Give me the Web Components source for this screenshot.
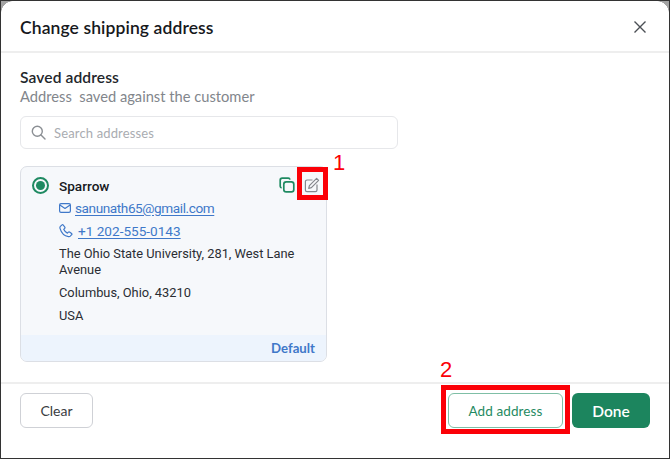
<!DOCTYPE html>
<html>
<head>
<meta charset="utf-8">
<title>Change shipping address</title>
<style>
  html, body { margin: 0; padding: 0; background: #8f8f8f; }
  body { width: 670px; height: 459px; overflow: hidden; font-family: "Lato", "Liberation Sans", sans-serif; }
</style>
</head>
<body>
<address-dialog heading="Change shipping address">
  <section-title title="Saved address" subtitle="Address&nbsp; saved against the customer"></section-title>
  <search-box placeholder="Search addresses"></search-box>
  <address-card name="Sparrow" email="sanunath65@gmail.com" phone="+1 202-555-0143" tag="Default">
    <p>The Ohio State University, 281, West Lane Avenue</p>
    <p>Columbus, Ohio, 43210</p>
    <p>USA</p>
  </address-card>
  <action-button slot="start" kind="plain">Clear</action-button>
  <action-button slot="end" kind="outline">Add address</action-button>
  <action-button slot="end" kind="solid">Done</action-button>
</address-dialog>
<red-callout number="1" style="left:297px;top:167px;width:31px;height:33px;--num-left:31px;--num-top:-21px"></red-callout>
<red-callout number="2" style="left:441px;top:385px;width:129px;height:49px;--num-left:-6px;--num-top:-32px"></red-callout>

<script>
class AddressDialog extends HTMLElement {
  constructor() {
    super();
    this.attachShadow({ mode: 'open' });
    this.shadowRoot.innerHTML = `
      <style>
        :host {
          display: flex;
          flex-direction: column;
          box-sizing: border-box;
          width: 670px;
          height: 459px;
          background: #fff;
          border: solid #333;
          border-width: 1px 1px 1px 1px;
          position: relative;
        }
        .corner { position: absolute; top: 0; width: 12px; height: 12px; }
        .corner.l { left: 0; background: radial-gradient(circle at 100% 100%, #fff 11.5px, #a3a3a3 12px); }
        .corner.r { right: 0; background: radial-gradient(circle at 0 100%, #fff 11.5px, #a3a3a3 12px); }
        header {
          flex: none;
          box-sizing: border-box;
          height: 52px;
          display: flex;
          align-items: center;
          justify-content: space-between;
          padding: 2px 23px 0 19px;
          border-bottom: 2px solid #eeeeee;
        }
        h1 { margin: 0; font-size: 17.5px; font-weight: 600; color: #16181c; letter-spacing: .1px; }
        svg { display: block; }
        main { flex: 1; padding: 15px 19px 0; display: flex; flex-direction: column; }
        footer {
          flex: none;
          height: 76px;
          box-sizing: border-box;
          display: flex;
          justify-content: space-between;
          align-items: flex-start;
          padding: 9px 19px 0;
          border-top: 2px solid #eeeeee;
        }
        .end { display: flex; gap: 9px; }
      </style>
      <span class="corner l"></span><span class="corner r"></span>
      <header>
        <h1>${this.getAttribute('heading')}</h1>
        <svg width="12" height="12" viewBox="0 0 12 12" fill="none" stroke="#4b4f55" stroke-width="1.4"><path d="M.5.5 11.500 11.500M11.500.5 .5 11.500"/></svg>
      </header>
      <main><slot></slot></main>
      <footer>
        <div><slot name="start"></slot></div>
        <div class="end"><slot name="end"></slot></div>
      </footer>`;
  }
}
customElements.define('address-dialog', AddressDialog);

class SectionTitle extends HTMLElement {
  constructor() {
    super();
    this.attachShadow({ mode: 'open' });
    this.shadowRoot.innerHTML = `
      <style>
        :host { display: block; }
        .t { font-size: 15.6px; line-height: 18px; font-weight: 600; color: #23262b; letter-spacing: .1px; }
        .s { font-size: 14.7px; line-height: 20px; color: #82868c; }
      </style>
      <div class="t">${this.getAttribute('title')}</div>
      <div class="s">${this.getAttribute('subtitle')}</div>`;
  }
}
customElements.define('section-title', SectionTitle);

class SearchBox extends HTMLElement {
  constructor() {
    super();
    this.attachShadow({ mode: 'open' });
    this.shadowRoot.innerHTML = `
      <style>
        :host {
          display: flex;
          align-items: center;
          gap: 8px;
          box-sizing: border-box;
          width: 378px;
          height: 33px;
          margin-top: 10px;
          padding-left: 10px;
          border: 1px solid #e6e7ea;
          border-radius: 6px;
          font-size: 13px;
          color: #a9acb1;
          letter-spacing: .15px;
        }
      </style>
      <svg width="15" height="15" viewBox="0 0 15 15" fill="none" stroke="#8b8f94" stroke-width="1.4" stroke-linecap="round"><circle cx="6.300" cy="6.300" r="5"/><path d="M10 10l4 4"/></svg>
      <span>${this.getAttribute('placeholder')}</span>`;
  }
}
customElements.define('search-box', SearchBox);

class AddressCard extends HTMLElement {
  constructor() {
    super();
    this.attachShadow({ mode: 'open' });
    this.shadowRoot.innerHTML = `
      <style>
        :host {
          display: flex;
          flex-direction: column;
          box-sizing: border-box;
          width: 307px;
          height: 196px;
          margin-top: 17px;
          background: #f6f8fb;
          border: 1px solid #dcdfe5;
          border-radius: 7px;
          overflow: hidden;
          font-family: "Roboto", "Liberation Sans", sans-serif;
          color: #2a2d33;
        }
        .body { flex: 1; padding: 9px 10px 0 11px; display: grid; grid-template-columns: 27px 1fr; align-content: start; }
        .radio { width: 17px; height: 17px; box-sizing: border-box; border: 2px solid #1f8a62; border-radius: 50%; display: grid; place-items: center; margin-top: 1px; }
        .radio i { width: 9px; height: 9px; border-radius: 50%; background: #1f8a62; }
        .top { display: flex; align-items: center; height: 20px; }
        .name { flex: 1; font-size: 13.6px; font-weight: 500; color: #17191d; }
        .tools { display: flex; gap: 9px; align-items: center; margin: -2px -4px 0 0; }
        .link { display: flex; align-items: center; gap: 4px; height: 23px; font-size: 13.6px; color: #3f78c9; }
        .link span { text-decoration: underline; text-underline-offset: 2px; }
        .link.mail span { letter-spacing: -.42px; }
        .link.tel span { margin-left: 1px; }
        .addr { font-size: 12.85px; line-height: 16px; padding-top: 4px; }
        ::slotted(p) { margin: 0 0 7px; }
        .band { flex: none; height: 26px; background: #edf4fd; display: flex; align-items: center; justify-content: flex-end; padding: 0 11px; font-family: "Lato", sans-serif; font-size: 13.2px; font-weight: 700; color: #3f78c9; }
        svg { display: block; flex: none; }
      </style>
      <div class="body">
        <div class="radio"><i></i></div>
        <div>
          <div class="top">
            <span class="name">${this.getAttribute('name')}</span>
            <div class="tools">
              <svg width="16" height="16" viewBox="0 0 16 16" fill="none" stroke="#1f8a62" stroke-width="1.7"><rect x="4.800" y="4.800" width="10" height="10" rx="2.400"/><path d="M11 2.600A1.900 1.900 0 0 0 9.300 1.200H3.200a2 2 0 0 0-2 2v6.100a1.900 1.900 0 0 0 1.400 1.700"/></svg>
              <svg width="16" height="16" viewBox="0 0 16 16" fill="none" stroke="#85888e" stroke-width="1.2" stroke-linejoin="round"><path d="M8.500 3H3a1.600 1.600 0 0 0-1.600 1.600V13A1.600 1.600 0 0 0 3 14.600h8.400A1.600 1.600 0 0 0 13 13V7.500"/><path d="M12.600 1.400l2 2-7.200 7.200-2.700.7.700-2.700z"/></svg>
            </div>
          </div>
          <div class="link mail">
            <svg width="12" height="10" viewBox="0 0 12 10" fill="none" stroke="#3f78c9" stroke-width="1.200" stroke-linejoin="round"><rect x=".6" y=".6" width="10.800" height="8.800" rx="1.400"/><path d="M.9 2 6 5.400 11.100 2"/></svg>
            <span>${this.getAttribute('email')}</span>
          </div>
          <div class="link tel">
            <svg width="14" height="14" viewBox="0 0 14 14" fill="none" stroke="#3f78c9" stroke-width="1.200" stroke-linejoin="round"><path d="M1.400 2.400 3 .9c.4-.3.9-.3 1.200.1l1.600 2.200c.3.4.2.8-.1 1.100l-1 1c.7 1.600 2 3 3.700 3.800l1-1c.3-.3.8-.4 1.100-.1l2.100 1.500c.4.3.5.9.1 1.200l-1.400 1.500c-.5.5-1.200.6-1.900.4C5.700 12 2.300 8.700 1 4.300c-.2-.7-.1-1.400.4-1.900z"/></svg>
            <span>${this.getAttribute('phone')}</span>
          </div>
          <div class="addr"><slot></slot></div>
        </div>
      </div>
      <div class="band">${this.getAttribute('tag')}</div>`;
  }
}
customElements.define('address-card', AddressCard);

class ActionButton extends HTMLElement {
  constructor() {
    super();
    this.attachShadow({ mode: 'open' });
    this.shadowRoot.innerHTML = `
      <style>
        :host {
          display: inline-flex;
          align-items: center;
          justify-content: center;
          box-sizing: border-box;
          height: 35px;
          border-radius: 6px;
          font-size: 14px;
        }
        :host([kind="plain"]) { width: 73px; border: 1px solid #cfd1d6; color: #3a3d42; }
        :host([kind="outline"]) { width: 115px; border: 1px solid #7fbfa6; color: #1f8a62; font-size: 13.5px; letter-spacing: .1px; }
        :host([kind="solid"]) { width: 78px; background: #1c855e; color: #fff; font-weight: 600; font-size: 15.5px; }
      </style>
      <slot></slot>`;
  }
}
customElements.define('action-button', ActionButton);

class RedCallout extends HTMLElement {
  constructor() {
    super();
    this.attachShadow({ mode: 'open' });
    this.shadowRoot.innerHTML = `
      <style>
        :host {
          position: absolute;
          box-sizing: border-box;
          border: 5px solid #fb0007;
        }
        span {
          position: absolute;
          left: var(--num-left);
          top: var(--num-top);
          font: 400 22px/24px "Liberation Sans", sans-serif;
          color: #fb0007;
        }
      </style>
      <span>${this.getAttribute('number')}</span>`;
  }
}
customElements.define('red-callout', RedCallout);
</script>
</body>
</html>
